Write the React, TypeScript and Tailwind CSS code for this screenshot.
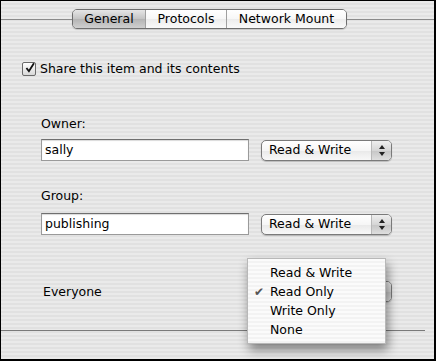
const font = { fontFamily: '"DejaVu Sans", Verdana, sans-serif' };

function Tabs() {
  return (
    <div className="flex h-[20px] items-stretch overflow-hidden rounded-[5px] border border-[#6e6e6e] text-[12.5px] leading-[16px] text-black shadow-[0_1px_1px_rgba(0,0,0,0.15)]">
      <div className="flex w-[72px] items-center justify-center bg-[linear-gradient(to_bottom,#e6e6e6,#c4c4c4_50%,#b4b4b4_51%,#cfcfcf)]">
        General
      </div>
      <div className="flex w-[81px] items-center justify-center border-l border-[#a0a0a0] bg-[linear-gradient(to_bottom,#ffffff,#f7f7f7_50%,#ececec_51%,#fafafa)]">
        Protocols
      </div>
      <div className="flex w-[120px] items-center justify-center border-l border-[#a0a0a0] bg-[linear-gradient(to_bottom,#ffffff,#f7f7f7_50%,#ececec_51%,#fafafa)]">
        Network Mount
      </div>
    </div>
  );
}

function Arrows() {
  return (
    <svg width="6" height="11" viewBox="0 0 6 11">
      <path d="M3 0 L6 4 L0 4 Z" fill="#222" />
      <path d="M3 11 L6 7 L0 7 Z" fill="#222" />
    </svg>
  );
}

function Popup({ label }: { label?: string }) {
  return (
    <div className="flex h-[21px] w-[131px] items-stretch overflow-hidden rounded-[5px] border border-[#7a7a7a] bg-[linear-gradient(to_bottom,#ffffff,#f6f6f6_50%,#e9e9e9_51%,#f8f8f8)] text-[12.5px] leading-[16px] text-black shadow-[0_1px_1px_rgba(0,0,0,0.2)]">
      <div className="flex flex-1 items-center pl-[7px]">{label}</div>
      <div className="flex w-[20px] items-center justify-center border-l border-[#b8b8b8] bg-[linear-gradient(to_bottom,#eeeeee,#d6d6d6_50%,#c6c6c6_51%,#dedede)]">
        <Arrows />
      </div>
    </div>
  );
}

function Field({ value }: { value: string }) {
  return (
    <div className="flex h-[22px] w-[208px] items-center border border-[#9a9a9a] border-t-[#6f6f6f] bg-white pl-[3px] text-[12.5px] leading-[16px] text-black shadow-[inset_0_1px_1px_rgba(0,0,0,0.15)]">
      {value}
    </div>
  );
}

const menuItems = [
  { label: "Read & Write", checked: false },
  { label: "Read Only", checked: true },
  { label: "Write Only", checked: false },
  { label: "None", checked: false },
];

export default function App() {
  return (
    <div
      style={font}
      className="relative h-[361px] w-[436px] overflow-hidden border-t border-l border-r-2 border-b-2 border-black bg-[repeating-linear-gradient(to_bottom,#eaeaea_0px,#eaeaea_2px,#e1e1e1_2px,#e1e1e1_4px)] text-[12.5px] leading-[16px] text-black"
    >
      <div className="mt-[8px] flex items-center">
        <div className="h-px w-[71px] bg-[#8a8a8a]" />
        <Tabs />
        <div className="h-px flex-1 bg-[#8a8a8a]" />
      </div>

      <div className="mt-[32px] flex items-center pl-[21px]">
        <div className="flex h-[14px] w-[14px] items-center justify-center rounded-[2px] border border-[#6a6a6a] bg-[linear-gradient(to_bottom,#ffffff,#d8d8d8)]">
          <svg width="14" height="14" viewBox="0 0 14 14" className="-mt-[3px] ml-[2px]">
            <path d="M2 7 L5.5 11.5 L12.5 0.5" stroke="#111" strokeWidth="2.6" fill="none" />
          </svg>
        </div>
        <span className="ml-[4px]">Share this item and its contents</span>
      </div>

      <div className="mt-[39px] pl-[40px]">Owner:</div>
      <div className="mt-[7px] flex items-center pl-[40px]">
        <Field value="sally" />
        <div className="ml-[12px]">
          <Popup label="Read & Write" />
        </div>
      </div>

      <div className="mt-[27px] pl-[40px]">Group:</div>
      <div className="mt-[9px] flex items-center pl-[40px]">
        <Field value="publishing" />
        <div className="ml-[12px]">
          <Popup label="Read & Write" />
        </div>
      </div>

      <div className="mt-[46px] flex items-center pl-[42px]">
        <span className="w-[218px]">Everyone</span>
        <Popup />
      </div>

      <div className="mt-[28px] h-px w-[424px] bg-[#7a7a7a]" />

      <div className="absolute left-[246px] top-[257px] w-[139px] border border-[#b8b8b8] bg-[repeating-linear-gradient(to_bottom,#fbfbfb_0px,#fbfbfb_2px,#f3f3f3_2px,#f3f3f3_4px)] pt-[4px] pb-[4px] shadow-[2px_6px_10px_rgba(0,0,0,0.45)]">
        {menuItems.map((item) => (
          <div key={item.label} className="flex h-[19px] items-center">
            <span className="w-[22px] pl-[6px] text-[12px] text-[#555]">{item.checked ? "✔" : ""}</span>
            {item.label}
          </div>
        ))}
      </div>
    </div>
  );
}
